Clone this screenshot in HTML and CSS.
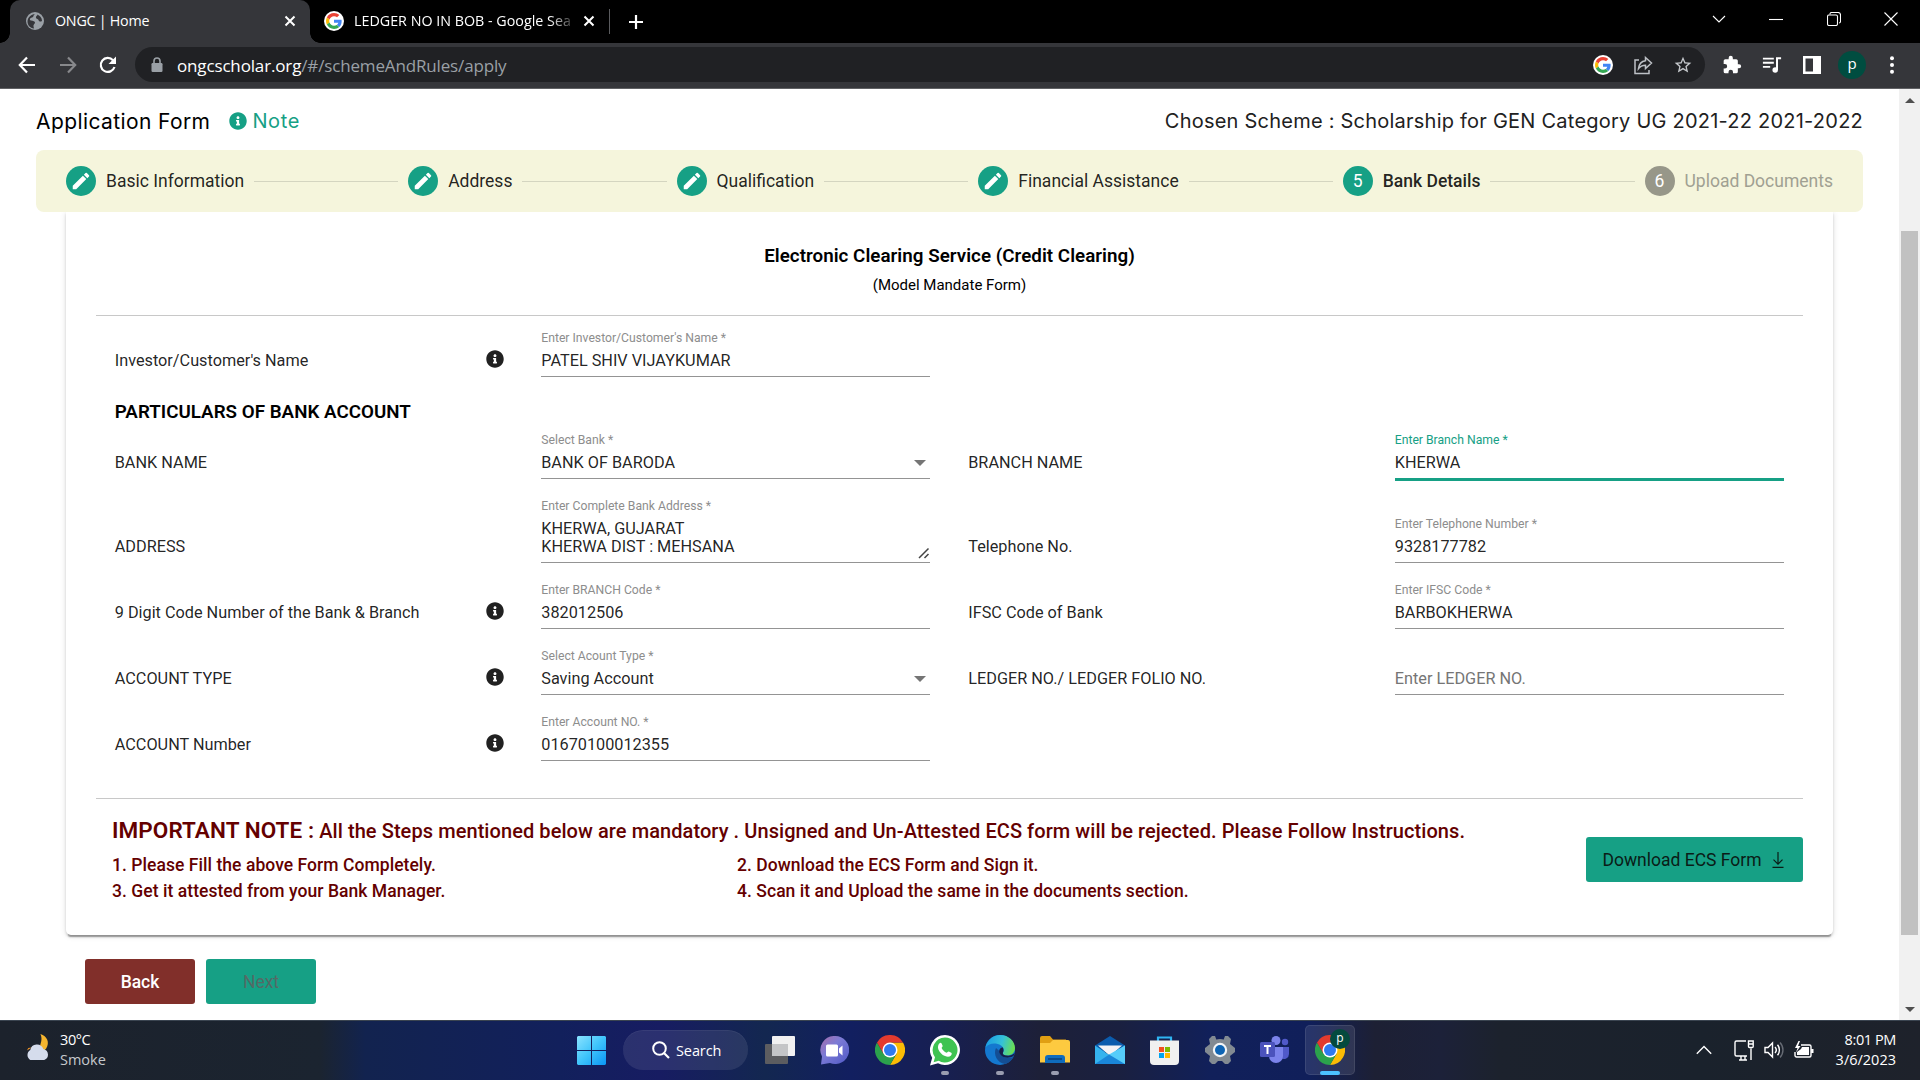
FILE: index.html
```html
<!DOCTYPE html>
<html lang="en">
<head>
<meta charset="utf-8">
<title>ONGC | Home</title>
<link rel="stylesheet" href="styles.css">
</head>
<body>
<svg class="defs" width="0" height="0">
  <defs>
    <symbol id="info" viewBox="0 0 512 512"><path fill="currentColor" d="M256 8C119 8 8 119 8 256s111 248 248 248 248-111 248-248S393 8 256 8zm0 110c23 0 42 19 42 42s-19 42-42 42-42-19-42-42 19-42 42-42zm56 254c0 7-5 12-12 12h-88c-7 0-12-5-12-12v-24c0-7 5-12 12-12h12v-64h-12c-7 0-12-5-12-12v-24c0-7 5-12 12-12h64c7 0 12 5 12 12v100h12c7 0 12 5 12 12z"/></symbol>
    <symbol id="pencil" viewBox="0 0 24 24"><path fill="currentColor" d="M3 17.25V21h3.75L17.81 9.94l-3.75-3.75L3 17.25zM20.71 7.04a1 1 0 0 0 0-1.41l-2.34-2.34a1 1 0 0 0-1.41 0l-1.83 1.83 3.75 3.75 1.83-1.83z"/></symbol>
    <symbol id="google" viewBox="-6 -6 60 60"><circle cx="24" cy="24" r="30" fill="#fff"/><path fill="#EA4335" d="M24 9.5c3.54 0 6.71 1.22 9.21 3.6l6.85-6.85C35.9 2.38 30.47 0 24 0 14.62 0 6.51 5.38 2.56 13.22l7.98 6.19C12.43 13.72 17.74 9.5 24 9.5z"/><path fill="#4285F4" d="M46.98 24.55c0-1.57-.15-3.09-.38-4.55H24v9.02h12.94c-.58 2.96-2.26 5.48-4.78 7.18l7.73 6c4.51-4.18 7.09-10.36 7.09-17.65z"/><path fill="#FBBC05" d="M10.53 28.59c-.48-1.45-.76-2.99-.76-4.59s.27-3.14.76-4.59l-7.98-6.19C.92 16.46 0 20.12 0 24c0 3.88.92 7.54 2.56 10.78l7.97-6.19z"/><path fill="#34A853" d="M24 48c6.48 0 11.93-2.13 15.89-5.81l-7.73-6c-2.15 1.45-4.92 2.3-8.16 2.3-6.26 0-11.57-4.22-13.47-9.91l-7.98 6.19C6.51 42.62 14.62 48 24 48z"/></symbol>
    <symbol id="close" viewBox="0 0 12 12"><path d="M1.5 1.5l9 9M10.5 1.5l-9 9" stroke="currentColor" stroke-width="2" fill="none"/></symbol>
    <symbol id="chrome" viewBox="0 0 48 48"><path fill="#fbbc05" d="M24 12h20.800A24 24 0 0 1 24 48l10.400-18Z"/><path fill="#2ba24c" d="M3.200 12A24 24 0 0 0 24 48l10.400-18L13.600 30Z"/><path fill="#e33b2e" d="M3.200 12A24 24 0 0 1 44.800 12H24L13.600 30Z"/><circle cx="24" cy="24" r="12" fill="#fff"/><circle cx="24" cy="24" r="9.600" fill="#2f7af0"/></symbol>
  </defs>
</svg>

<header class="tabs">
  <div class="tab tab-active">
    <svg class="fav" viewBox="0 0 18 18"><circle cx="9" cy="9" r="9" fill="#9aa0a6"/><path d="M9 2c-2 1-1 3-3 3.500S3 8 5 8.500s4 .5 4 2-2 2-1.500 4l.5 2c-4-.3-6.500-3.500-6.500-7S5 2 9 2zM11 2.500c3 1 5 3.500 5 6.500-2 1-3 .5-3.500-1S9.500 7 10 5s2-1 1-2.500zM14 12l-2 2.500" fill="#35363a"/></svg>
    <span class="tab-title tight">ONGC | Home</span>
    <svg class="x"><use href="#close"/></svg>
  </div>
  <div class="tab">
    <svg class="fav g"><use href="#google"/></svg>
    <span class="tab-title fade">LEDGER NO IN BOB - Google Sea</span>
    <svg class="x"><use href="#close"/></svg>
  </div>
  <i class="tab-sep"></i>
  <svg class="plus" viewBox="0 0 16 16"><path d="M8 1v14M1 8h14" stroke="#fff" stroke-width="2.200"/></svg>
  <div class="winctl">
    <svg viewBox="0 0 14 14"><path d="M1 4l6 6 6-6" /></svg>
    <svg viewBox="0 0 14 14"><path d="M0 7.500h14"/></svg>
    <svg viewBox="0 0 14 14"><rect x=".5" y="3" width="10" height="10.500" rx="1.500"/><path d="M3 2.500V2a1.500 1.500 0 0 1 1.500-1.500H11A2.500 2.500 0 0 1 13.500 3v6.500a1.500 1.500 0 0 1-1.500 1.500"/></svg>
    <svg viewBox="0 0 14 14"><path d="M.5.5l13 13M13.500.5l-13 13"/></svg>
  </div>
</header>

<nav class="toolbar">
  <div class="nav-btns">
    <svg viewBox="0 0 18 18"><path d="M17 9H2M9 1.500L1.800 9 9 16.500" stroke="#fff"/></svg>
    <svg viewBox="0 0 18 18"><path d="M1 9h15M9 1.500L16.200 9 9 16.500" stroke="#88898c"/></svg>
    <svg viewBox="0 0 18 18"><path d="M15.500 11A7 7 0 1 1 14 4.200" stroke="#fff"/><path d="M17 .5V8h-7.500z" fill="#fff"/></svg>
  </div>
  <div class="omnibox">
    <svg class="lock" viewBox="0 0 12 16"><rect x=".5" y="6" width="11" height="9" rx="1.200" fill="#9aa0a6"/><path d="M3 6V4a3 3 0 0 1 6 0v2" fill="none" stroke="#9aa0a6" stroke-width="1.600"/></svg>
    <span class="url"><b>ongcscholar.org</b>/#/schemeAndRules/apply</span>
    <div class="omni-icons">
      <svg class="fav"><use href="#google"/></svg>
      <svg viewBox="0 0 20 20"><path d="M6 5H2v13.500h14V15M12.500 2.500L18.500 8l-6 5.500v-3.300c-3.500 0-5.500 1.300-7 3.300.5-4.500 3-7.300 7-7.800z" fill="none" stroke="#bdc1c6" stroke-width="1.500"/></svg>
      <svg viewBox="0 0 24 24"><path fill="#c4c7cb" d="M22 9.240l-7.190-.62L12 2 9.190 8.630 2 9.240l5.460 4.730L5.820 21 12 17.270 18.180 21l-1.630-7.030L22 9.240zM12 15.400l-3.760 2.270 1-4.280-3.320-2.880 4.380-.38L12 6.100l1.710 4.040 4.380.38-3.320 2.880 1 4.280L12 15.400z"/></svg>
    </div>
  </div>
  <div class="ext">
    <svg viewBox="0 0 24 24"><path fill="#fff" d="M20.500 11H19V7a2 2 0 0 0-2-2h-4V3.500a2.500 2.500 0 0 0-5 0V5H4a2 2 0 0 0-2 2v3.800h1.500a2.700 2.700 0 0 1 0 5.400H2V20a2 2 0 0 0 2 2h3.800v-1.500a2.700 2.700 0 0 1 5.400 0V22H17a2 2 0 0 0 2-2v-4h1.500a2.500 2.500 0 0 0 0-5z"/></svg>
    <svg viewBox="0 0 22 20"><path d="M1 3h12M1 7.500h12M1 12h8" stroke="#fff" stroke-width="2"/><circle cx="14.500" cy="15.500" r="3" fill="#fff"/><path d="M16.500 15.500V2.500H21" stroke="#fff" stroke-width="2.200" fill="none"/></svg>
    <svg viewBox="0 0 20 20"><path fill="#fff" fill-rule="evenodd" d="M1 1h18v18H1zM3.500 3.500v13H11v-13z"/></svg>
    <span class="avatar">p</span>
    <svg viewBox="0 0 20 20" fill="#fff"><circle cx="10" cy="3.200" r="2"/><circle cx="10" cy="10" r="2"/><circle cx="10" cy="16.800" r="2"/></svg>
  </div>
</nav>

<div class="viewport">
<main class="page">
  <div class="page-head">
    <h1>Application Form</h1>
    <a class="note"><svg><use href="#info"/></svg><span>Note</span></a>
    <p class="scheme">Chosen Scheme : Scholarship for GEN Category UG 2021-22 2021-2022</p>
  </div>

  <ol class="stepper">
    <li><i class="dot"><svg><use href="#pencil"/></svg></i>Basic Information</li>
    <li class="line"></li>
    <li><i class="dot"><svg><use href="#pencil"/></svg></i>Address</li>
    <li class="line"></li>
    <li><i class="dot"><svg><use href="#pencil"/></svg></i>Qualification</li>
    <li class="line"></li>
    <li><i class="dot"><svg><use href="#pencil"/></svg></i>Financial Assistance</li>
    <li class="line"></li>
    <li class="current"><i class="dot">5</i>Bank Details</li>
    <li class="line"></li>
    <li class="todo"><i class="dot">6</i>Upload Documents</li>
  </ol>

  <section class="card">
    <div class="card-head">
      <h2>Electronic Clearing Service (Credit Clearing)</h2>
      <p>(Model Mandate Form)</p>
    </div>
    <div class="row row-first">
      <div class="label">Investor/Customer's Name<svg><use href="#info"/></svg></div>
      <div class="field"><label>Enter Investor/Customer's Name *</label><div class="value">PATEL SHIV VIJAYKUMAR</div></div>
    </div>
    <h3>PARTICULARS OF BANK ACCOUNT</h3>
    <div class="row row-bank">
      <div class="label">BANK NAME</div>
      <div class="field"><label>Select Bank *</label><div class="value select">BANK OF BARODA</div></div>
      <div class="label">BRANCH NAME</div>
      <div class="field focused"><label>Enter Branch Name *</label><div class="value">KHERWA</div></div>
    </div>
    <div class="row row-tall">
      <div class="label">ADDRESS</div>
      <div class="field"><label>Enter Complete Bank Address *</label><div class="value area">KHERWA, GUJARAT<br>KHERWA DIST : MEHSANA<svg class="grip" viewBox="0 0 12 12"><path d="M1 11L10.500 1.500M6.500 11l4-4" stroke="#444" stroke-width="1.500"/></svg></div></div>
      <div class="label">Telephone No.</div>
      <div class="field"><label>Enter Telephone Number *</label><div class="value">9328177782</div></div>
    </div>
    <div class="row">
      <div class="label">9 Digit Code Number of the Bank &amp; Branch<svg><use href="#info"/></svg></div>
      <div class="field"><label>Enter BRANCH Code *</label><div class="value">382012506</div></div>
      <div class="label">IFSC Code of Bank</div>
      <div class="field"><label>Enter IFSC Code *</label><div class="value">BARBOKHERWA</div></div>
    </div>
    <div class="row">
      <div class="label">ACCOUNT TYPE<svg><use href="#info"/></svg></div>
      <div class="field"><label>Select Acount Type *</label><div class="value select">Saving Account</div></div>
      <div class="label">LEDGER NO./ LEDGER FOLIO NO.</div>
      <div class="field"><div class="value empty">Enter LEDGER NO.</div></div>
    </div>
    <div class="row">
      <div class="label">ACCOUNT Number<svg><use href="#info"/></svg></div>
      <div class="field"><label>Enter Account NO. *</label><div class="value">01670100012355</div></div>
    </div>
    <div class="important">
      <div class="notes">
        <p class="lead"><strong>IMPORTANT NOTE :</strong> All the Steps mentioned below are mandatory . Unsigned and Un-Attested ECS form will be rejected. Please Follow Instructions.</p>
        <div class="steps">
          <p>1. Please Fill the above Form Completely.</p><p>2. Download the ECS Form and Sign it.</p>
          <p>3. Get it attested from your Bank Manager.</p><p>4. Scan it and Upload the same in the documents section.</p>
        </div>
      </div>
      <button class="download">Download ECS Form<svg viewBox="0 0 14 18"><path d="M7 1v12M2.500 8.700L7 13.200l4.500-4.500M1.500 16.300h11" fill="none" stroke="#0a1c17" stroke-width="1.200"/></svg></button>
    </div>
  </section>

  <div class="actions">
    <button class="back">Back</button>
    <button class="next">Next</button>
  </div>
</main>
<aside class="scrollbar"><i class="up"></i><i class="thumb"></i><i class="down"></i></aside>
</div>

<footer class="taskbar">
  <div class="weather">
    <svg viewBox="0 0 28 28"><path d="M17 0c7 2 10 9 6 15-2 3-5 4-8 4 2-2 1-5 2-8s2-7 0-11z" fill="#f5b52e"/><path d="M3 17l1.500-2.500L8 14z" fill="#f0962a"/><path d="M6.500 27A6.200 6.200 0 0 1 6.500 16.500 7 7 0 0 1 20 15.500a6 6 0 0 1 1 11.500z" fill="#d5dcec"/></svg>
    <div><span class="tight">30°C</span><span class="dim">Smoke</span></div>
  </div>
  <div class="apps">
    <div class="slot"><svg width="29" height="29" viewBox="0 0 29 29"><defs><linearGradient id="wn" x1="0" y1="0" x2="1" y2="1"><stop offset="0" stop-color="#8be3ff"/><stop offset=".5" stop-color="#3fc4fb"/><stop offset="1" stop-color="#0a96f5"/></linearGradient></defs><path fill="url(#wn)" d="M1 0h13v14H0V1zM15 0h13l1 1v13H15zM0 15h14v14H1l-1-1zM15 15h14v13l-1 1H15z"/></svg></div>
    <div class="search"><svg viewBox="0 0 18 18"><circle cx="7.500" cy="7.500" r="6.300" fill="none" stroke="#fff" stroke-width="2"/><path d="M12 12l5 5" stroke="#fff" stroke-width="2.200"/></svg><span>Search</span></div>
    <div class="slot"><svg width="30" height="28" viewBox="0 0 30 28"><rect x="0" y="8" width="23" height="20" rx="1" fill="#5c5d60"/><rect x="7" y="0" width="23" height="20" rx="1" fill="#f1f1f1"/><rect x="7" y="8" width="16" height="12" fill="#c4c5c7"/></svg></div>
    <div class="slot"><svg width="29" height="29" viewBox="0 0 29 29"><defs><linearGradient id="ct" x1="0" y1="0" x2="1" y2="1"><stop offset="0" stop-color="#a86ca8"/><stop offset=".4" stop-color="#7c7bd6"/><stop offset="1" stop-color="#4f58c6"/></linearGradient></defs><path fill="url(#ct)" d="M15 0a14 14 0 1 1-5 27L1 28.500l1-8A14 14 0 0 1 15 0z"/><rect x="6" y="8.500" width="12" height="12" rx="1.500" fill="#fff"/><path d="M19 12.500l3.500-3v10l-3.500-3z" fill="#fff"/></svg></div>
    <div class="slot"><svg width="30" height="30"><use href="#chrome"/></svg></div>
    <div class="slot run"><svg width="30" height="31" viewBox="0 0 30 31"><path fill="#fff" d="M15 0a15 15 0 1 1-7 28.300L0 30.500l2.200-7.700A15 15 0 0 1 15 0z"/><path fill="#3fc351" d="M15 2.500a12.500 12.500 0 1 1-6.300 23.300l-5.100 1.400L5 22.200A12.500 12.500 0 0 1 15 2.500z"/><path fill="#fff" d="M9.500 8.200c.8-.8 1.700-.7 2.100.2l1 2.400c.3.700-.9 1.600-1 2.200 1 2.200 2.700 3.800 5 4.700.6.100 1.500-1.400 2.200-1.100l2.500 1.200c.8.500.4 2-.3 2.700-1.500 1.400-3.600 1.500-6 .5-3.200-1.400-5.400-3.700-6.600-6.600-.8-2.300-.4-4.700 1.100-6.200z"/></svg></div>
    <div class="slot run"><svg width="30" height="30" viewBox="0 0 30 30"><defs><linearGradient id="ed" x1="0" y1=".3" x2="1" y2=".5"><stop offset="0" stop-color="#1b9de2"/><stop offset=".55" stop-color="#35c1d8"/><stop offset="1" stop-color="#6be04e"/></linearGradient></defs><circle cx="15" cy="15" r="15" fill="#1478cf"/><path fill="#144e94" d="M11 13c-3 6 1 15 9 16 4-1 7-4 8.500-7-6 2.500-12 .5-13-5z"/><path fill="url(#ed)" d="M.5 12.500C2 5 8 0 15 0c9 0 15 6.500 15 13 0 5-4 7.500-8 7.500-3.500 0-5-1.500-4-3 1.500-2 1-5-2-7C11 7.500 4 8 .5 12.500z"/><path fill="#171e4a" d="M18 17.500c1-2 .5-4-.5-5.300-3 .8-4.500 4-2 7.300 3 4 9 4 13 1.500l1.500-3.500c-2.500 3-6 3.500-9 3-3-.5-3.500-2-3-3z"/></svg></div>
    <div class="slot run"><svg width="30" height="28" viewBox="0 0 30 28"><path fill="#e09f13" d="M0 2a2 2 0 0 1 2-2h8l3 3.500h13V14H0z"/><path fill="#fdca40" d="M0 7h10l3-3h15a2 2 0 0 1 2 2v20.500H0z"/><path fill="#0f6cbd" d="M5 27v-5a3 3 0 0 1 3-3h14a3 3 0 0 1 3 3v5z"/><path d="M8 23h14" stroke="#0a3f78" stroke-width="1.500"/></svg></div>
    <div class="slot"><svg width="30" height="28" viewBox="0 0 30 28"><path fill="#0b5cad" d="M0 9.500L15 0l15 9.500V16H0z"/><path fill="#f3f3f5" d="M3 9.500h24L15 20z"/><path fill="#35b3ee" d="M0 9.500l15 10 15-10V28H0z"/><path fill="#1a86d9" d="M0 28l15-10 15 10z"/><path fill="#56cdfa" d="M30 9.500V28L14 18.500z"/></svg></div>
    <div class="slot"><svg width="29" height="29" viewBox="0 0 29 29"><path d="M8 6V1.500h13V6" fill="none" stroke="#2fb4f2" stroke-width="2.200"/><path fill="#f0f0f0" d="M0 4.500h29V25a4 4 0 0 1-4 4H4a4 4 0 0 1-4-4z"/><path fill="#f25022" d="M9 11h5v5H9z"/><path fill="#7fba00" d="M15 11h5v5h-5z"/><path fill="#00a4ef" d="M9 17h5v5H9z"/><path fill="#ffb900" d="M15 17h5v5h-5z"/></svg></div>
    <div class="slot"><svg width="30" height="28" viewBox="0 0 30 28"><g fill="#828a92"><circle cx="15" cy="14" r="11"/><path d="M11.500 4L10 0h-3l-3 3 1 5-5 4v4l5 4-1 5 3 3h3l3-3h4l3 3h3l3-3-1-5 5-4v-4l-5-4 1-5-3-3h-3l-1.500 4z"/></g><circle cx="15" cy="14" r="7.200" fill="#f2f4f6"/><circle cx="15" cy="14" r="5" fill="#0e64b4"/></svg></div>
    <div class="slot"><svg width="30" height="28" viewBox="0 0 30 28"><circle cx="25" cy="6" r="3.200" fill="#5059c9"/><circle cx="16" cy="4.500" r="4.500" fill="#7b83eb"/><path fill="#5059c9" d="M21 11h8v7a5 5 0 0 1-8 4z"/><path fill="#7b83eb" d="M9 11h14v9a7 7 0 0 1-14 0z"/><rect x="0" y="6" width="15" height="15" rx="1.500" fill="#4b53bc"/><path d="M4 10h7M7.500 10v8" stroke="#fff" stroke-width="2"/></svg></div>
    <div class="slot active"><svg width="30" height="30"><use href="#chrome"/></svg><span class="badge">p</span></div>
  </div>
  <div class="tray">
    <svg width="16" height="10" viewBox="0 0 16 10"><path d="M.8 8.700L8 1.500l7.200 7.200"/></svg>
    <svg class="net" width="20" height="21" viewBox="0 0 20 21"><path d="M12 1H2.500A1.500 1.500 0 0 0 1 2.500v12A1.500 1.500 0 0 0 2.500 16H13M5 20h8M7 16v4M11 16v4M17 8.500V20M14.500 1h4.700v5.500a1 1 0 0 1-1 1h-2.700a1 1 0 0 1-1-1zM14.500 4h4.700"/></svg>
    <svg class="vol" width="20" height="18" viewBox="0 0 20 18"><path d="M1 6.500h3L8.500 2v14L4 11.500H1z"/><path d="M11 6a4.500 4.500 0 0 1 0 6M13.500 3.800a8 8 0 0 1 0 10.400"/><path d="M16 1.500a11 11 0 0 1 0 15" stroke="#666b74"/></svg>
    <svg class="bat" width="20" height="18" viewBox="0 0 20 18"><path d="M7 4h8.500A1.500 1.500 0 0 1 17 5.500v9a1.500 1.500 0 0 1-1.500 1.500h-13A1.500 1.500 0 0 1 1 14.500V11"/><path d="M8 6h7v8H3v-3l4-3z" fill="#fff" stroke="none"/><path d="M18.300 8v4" stroke-width="2.400"/><path d="M4.500 0L1 7h2.500L2 11.500 6.500 5H4L6 0z" fill="#fff" stroke="none"/></svg>
    <div class="clock"><span class="tight">8:01 PM</span><span>3/6/2023</span></div>
  </div>
</footer>
</body>
</html>
```
FILE: styles.css
```css
* { box-sizing: border-box; }
html, body { margin: 0; height: 1080px; overflow: hidden; }
body { display: flex; flex-direction: column; background: #fff; font-family: Roboto, sans-serif; color: rgba(0,0,0,.87); }
h1, h2, h3, p, ol { margin: 0; padding: 0; font-weight: inherit; }
button { border: 0; font: inherit; padding: 0; }
svg { display: block; flex: none; }
.defs { position: absolute; }

/* Browser tab strip */
.tabs { display: flex; align-items: center; height: 43px; padding-left: 10px; background: #000; color: #fff; font: 14.300px "Open Sans", sans-serif; }
.tab { display: flex; align-items: center; height: 43px; width: 300px; padding: 0 14px 2px 16px; }
.tab + .tab { width: 299px; padding: 0 14px 2px 14px; }
.tab-active { position: relative; background: #35363a; border-radius: 10px 10px 0 0; }
.tab-active::before, .tab-active::after { content: ""; position: absolute; bottom: 0; width: 10px; height: 10px; }
.tab-active::before { left: -10px; background: radial-gradient(circle at 0 0, #000 9.5px, #35363a 10px); }
.tab-active::after { right: -10px; background: radial-gradient(circle at 100% 0, #000 9.5px, #35363a 10px); }
.fav { width: 18px; height: 18px; margin-right: 11px; }
.fav.g { width: 20px; height: 20px; margin-right: 10px; }
.tab-title { flex: 1; white-space: nowrap; padding-bottom: 1px; }
.tab-title.tight { letter-spacing: -.25px; }
.fade { flex: none; width: 224px; -webkit-mask-image: linear-gradient(90deg, #000 195px, transparent 224px); mask-image: linear-gradient(90deg, #000 195px, transparent 224px); margin-right: 5px; }
.x { width: 12px; height: 12px; }
.tab-sep { width: 1px; height: 25px; background: #5a5b5e; }
.plus { width: 16px; height: 16px; margin-left: 18px; }
.winctl { display: flex; gap: 43.300px; margin: 0 22px 5px auto; }
.winctl svg { width: 14px; height: 14px; fill: none; stroke: #fff; stroke-width: 1.100; }

/* Toolbar */
.toolbar { display: flex; align-items: center; height: 46px; padding: 0 18px 2px; background: #35363a; border-bottom: 1px solid #606164; }
.nav-btns { display: flex; gap: 22.500px; width: 117px; }
.nav-btns svg { width: 18px; height: 18px; fill: none; stroke-width: 2.200; }
.omnibox { display: flex; align-items: center; width: 1570px; height: 35px; padding: 0 12px 0 16px; background: #202124; border-radius: 18px; }
.lock { width: 12px; height: 16px; margin-right: 14px; }
.url { padding-top: 1px; font: 17px "Open Sans", sans-serif; letter-spacing: -.150px; color: #9aa0a6; white-space: nowrap; }
.url b { font-weight: 400; color: #fff; }
.omni-icons { display: flex; align-items: center; gap: 20px; margin-left: auto; }
.omni-icons svg { width: 20px; height: 20px; margin: 0; }
.ext { display: flex; align-items: center; margin-left: 17px; gap: 20px; }
.ext svg { width: 20px; height: 20px; }
.avatar { width: 28px; height: 28px; margin: 0 -4px; border-radius: 50%; background: #004d40; color: #fff; font: 15px/25px "Open Sans", sans-serif; text-align: center; }

/* Page */
.viewport { display: flex; height: 931px; }
.page { flex: 1; padding: 0 36px; }
.page-head { display: flex; align-items: center; height: 61px; padding-top: 3px; font: 20px "Inter", sans-serif; color: #212121; }
.page-head h1 { font: 21px "Inter", sans-serif; letter-spacing: .400px; color: #000; }
.note { display: flex; align-items: center; gap: 5px; margin-left: 19px; color: #16a085; letter-spacing: .600px; }
.note svg { width: 18px; height: 18px; }
.scheme { margin-left: auto; letter-spacing: .230px; }
.stepper { display: flex; align-items: center; gap: 10px; height: 62px; padding: 0 30px; list-style: none; background: #f5f5dc; border-radius: 8px; font-size: 17.500px; position: relative; }
.stepper li { display: flex; align-items: center; gap: 10px; white-space: nowrap; }
.stepper .line { flex: 1; height: 1px; background: #d4d5c0; }
.dot { display: flex; align-items: center; justify-content: center; width: 30px; height: 30px; border-radius: 50%; background: #16a085; color: #fff; font-style: normal; font-size: 17.500px; }
.dot svg { width: 22px; height: 22px; }
.current { font-weight: 500; }
.current .dot { font-weight: 400; }
.todo { color: #a0a092; }
.todo .dot { background: #979789; }
.card { height: 723px; margin: 0 30px 0 29.500px; padding: 0 30px 0 30.500px; background: #fff; border-radius: 0 0 5px 5px; box-shadow: 0 3.750px 1.250px -2.500px rgba(0,0,0,.3), 0 2px 2.500px rgba(0,0,0,.14), 0 1px 6px rgba(0,0,0,.12); }
.card-head { height: 104px; padding-top: 31px; border-bottom: 1px solid #c8c8c8; text-align: center; color: #000; }
.card-head h2 { font-size: 18.750px; line-height: 26px; font-weight: 600; letter-spacing: .040px; }
.card-head p { font-size: 15px; line-height: 20px; margin-top: 6px; }
.row { display: grid; grid-template-columns: repeat(4, 1fr); align-items: end; height: 66px; font-size: 16.250px; line-height: 18px; }
.row > * { margin: 0 19.500px 0 18.500px; }
.row-first { height: 61px; }
.row-bank { height: 51px; }
.row-tall { height: 84px; }
.row > .label { margin: 0 18.500px 0 18.750px; }
.label { display: flex; justify-content: space-between; align-items: center; padding-bottom: 7px; }
.label svg { width: 18px; height: 18px; margin: -2px 0 0; position: relative; top: -1px; }
.field { display: flex; flex-direction: column; gap: 5px; }
.field label { font-size: 12.190px; line-height: 18px; color: #8d8d8d; }
.value { padding-bottom: 6px; border-bottom: 1px solid #949494; }
.select { display: flex; justify-content: space-between; align-items: center; }
.select::after { content: ""; margin-right: 4px; border: 6px solid transparent; border-top-color: #757575; border-bottom: 0; }
.area { position: relative; }
.grip { position: absolute; right: 0; bottom: 3px; width: 12px; height: 12px; }
.empty { color: #757575; }
.focused { margin-bottom: -2px; }
.focused label { color: #16a085; }
.focused .value { border-bottom: 3px solid #16a085; }
.card h3 { height: 51px; padding: 23px 18.750px 0; font-size: 18.750px; line-height: 24px; font-weight: 600; letter-spacing: .020px; color: #000; }
.important { display: flex; justify-content: space-between; margin-top: 37px; border-top: 1px solid #c8c8c8; padding: 17px 0 0 16px; color: #640000; font-weight: 500; }
.notes { width: 1300px; }
.lead { font-size: 20px; line-height: 28px; white-space: nowrap; letter-spacing: .075px; }
.lead strong { font-size: 22.500px; font-weight: 600; }
.steps { display: grid; grid-template-columns: 625px 600px; margin-top: 7px; font-size: 17.500px; line-height: 26px; letter-spacing: .050px; }
.download { display: flex; align-items: center; justify-content: center; gap: 9px; width: 217px; height: 45px; margin-top: 21px; padding-right: 2px; border-radius: 3px; background: #16a085; color: #0a1c17; font-size: 17.500px; font-weight: 400; }
.download svg { width: 14px; height: 18px; }
.actions { display: flex; gap: 11px; margin: 24px 49px 0; font-size: 17.500px; font-weight: 500; }
.actions button { width: 110px; height: 45px; border-radius: 3px; }
.back { background: #812f2a; color: #fff; }
.next { background: #16a085; color: #546a66; font-weight: 400; }
.scrollbar { display: flex; flex-direction: column; align-items: center; width: 21px; background: #f1f1f1; padding: 8px 0; }
.up, .down { border: 5px solid transparent; }
.up { border-bottom-color: #505050; border-top: 0; margin-top: 1px; }
.down { border-top-color: #505050; border-bottom: 0; margin-top: auto; }
.thumb { width: 17px; height: 704px; margin-top: 128px; background: #c1c1c1; }

/* Taskbar */
.taskbar { display: flex; height: 60px; border-top: 1px solid #3a4450; color: #fff; font: 14.500px/20px "Open Sans", sans-serif; background: linear-gradient(90deg, #1c222c 0, #1b2430 320px, #12234f 365px, #12205c 560px, #171c62 660px, #132750 765px, #121f60 850px, #171f52 940px, #1d2038 1040px, #1a2040 1120px, #11205a 1210px, #101f5a 1310px, #1d2034 1375px, #1c2139 1440px, #1c222d 1500px, #1a222c 1700px, #1e222b 1920px); }
.weather { display: flex; width: 564px; padding: 9px 0 0 24px; }
.weather svg { width: 27px; height: 27px; margin: 4px 9px 0 0; }
.weather span, .clock span { display: block; }
.taskbar .tight { letter-spacing: -.4px; }
.weather .dim { color: #c5c8cc; }
.apps { display: flex; align-items: center; height: 58px; }
.slot { position: relative; display: flex; align-items: center; justify-content: center; width: 55px; height: 50px; }
.run::after, .active::after { content: ""; position: absolute; bottom: 0; width: 8px; height: 4px; border-radius: 2px; background: #9a9db0; }
.search { display: flex; align-items: center; width: 125px; height: 40px; margin: 0 4px; padding-left: 29px; gap: 6px; border-radius: 20px; background: rgba(255,255,255,.09); box-shadow: inset 0 1px rgba(255,255,255,.06); letter-spacing: -.1px; }
.search svg { width: 18px; height: 18px; }
.search span { padding-top: 1px; }
.active::before { content: ""; position: absolute; inset: 0 2px 0 3px; border-radius: 5px; background: rgba(255,255,255,.1); border: 1px solid rgba(255,255,255,.09); }
.active::after { width: 20px; background: #4cc2ff; }
.active svg { position: relative; }
.badge { position: absolute; left: 28px; top: 4px; width: 20px; height: 20px; border-radius: 50%; background: #044a3e; font-size: 12px; line-height: 17px; text-align: center; }
.tray { display: flex; align-items: center; height: 58px; margin-left: auto; padding-right: 24px; }
.tray svg { fill: none; stroke: #fff; stroke-width: 1.400; }
.net { margin-left: 22px; }
.vol { margin-left: 10px; }
.bat { margin-left: 10px; }
.clock { width: 82px; text-align: right; }
```
